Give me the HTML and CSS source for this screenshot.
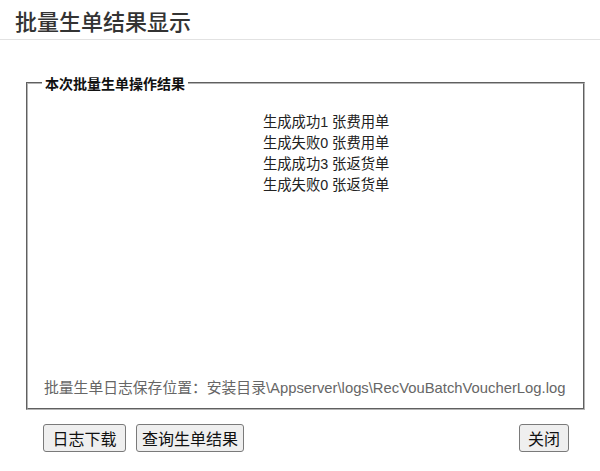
FILE: index.html
```html
<!DOCTYPE html>
<html lang="zh-CN">
<head>
  <meta charset="UTF-8" />
  <title>批量生单结果显示</title>
  <link rel="stylesheet" href="styles.css">
</head>
<body>
  <div class="page-header">
    <h1>批量生单结果显示</h1>
  </div>

  <fieldset class="result-box">
    <legend>本次批量生单操作结果</legend>
    <div class="result-body">
      <div class="result-lines">
        <div>生成成功1 张费用单</div>
        <div>生成失败0 张费用单</div>
        <div>生成成功3 张返货单</div>
        <div>生成失败0 张返货单</div>
      </div>
      <div class="log-path">批量生单日志保存位置：安装目录\Appserver\logs\RecVouBatchVoucherLog.log</div>
    </div>
  </fieldset>

  <div class="actions">
    <button class="btn btn-log">日志下载</button>
    <button class="btn btn-query">查询生单结果</button>
    <span class="spacer"></span>
    <button class="btn btn-close">关闭</button>
  </div>
</body>
</html>
```

FILE: styles.css
```css
body {
  margin: 0;
  font-family: "Liberation Sans", "Noto Sans CJK SC", sans-serif;
  color: #222;
  background: #fff;
}

.page-header {
  height: 39px;
  border-bottom: 1px solid #e2e2e2;
  display: flex;
  align-items: center;
  padding-left: 15px;
}

.page-header h1 {
  margin: 0;
  font-family: "Noto Sans CJK SC", sans-serif;
  font-size: 22px;
  font-weight: 500;
  color: #333;
}

.result-box {
  margin: 33px 15px 0 26px;
  padding: 0 10px 0 16px;
  border: 2px groove #b4b4b4;
}

.result-box legend {
  padding: 0 3px;
  margin-left: -2px;
  font-family: "Noto Sans CJK SC", sans-serif;
  font-size: 14px;
  font-weight: bold;
  color: #111;
}

.result-body {
  display: flex;
  flex-direction: column;
  height: 315px;
}

.result-lines {
  margin-top: 19px;
  padding-left: 219px;
  font-size: 14.3px;
  line-height: 21px;
  color: #222;
}

.log-path {
  margin-top: auto;
  margin-bottom: 10px;
  font-size: 14.8px;
  line-height: 20px;
  color: #666;
  white-space: nowrap;
}

.actions {
  display: flex;
  gap: 10px;
  margin-top: 14px;
  padding: 0 31px 0 43px;
}

.spacer {
  flex: 1;
}

.btn {
  height: 28px;
  padding: 0;
  font-family: "Noto Sans CJK SC", sans-serif;
  font-size: 16px;
  color: #111;
  background: #efefef;
  border: 1px solid #7a7a7a;
  border-radius: 3px;
  cursor: pointer;
}

.btn-log {
  width: 83px;
}

.btn-query {
  width: 108px;
}

.btn-close {
  width: 50px;
}
```
